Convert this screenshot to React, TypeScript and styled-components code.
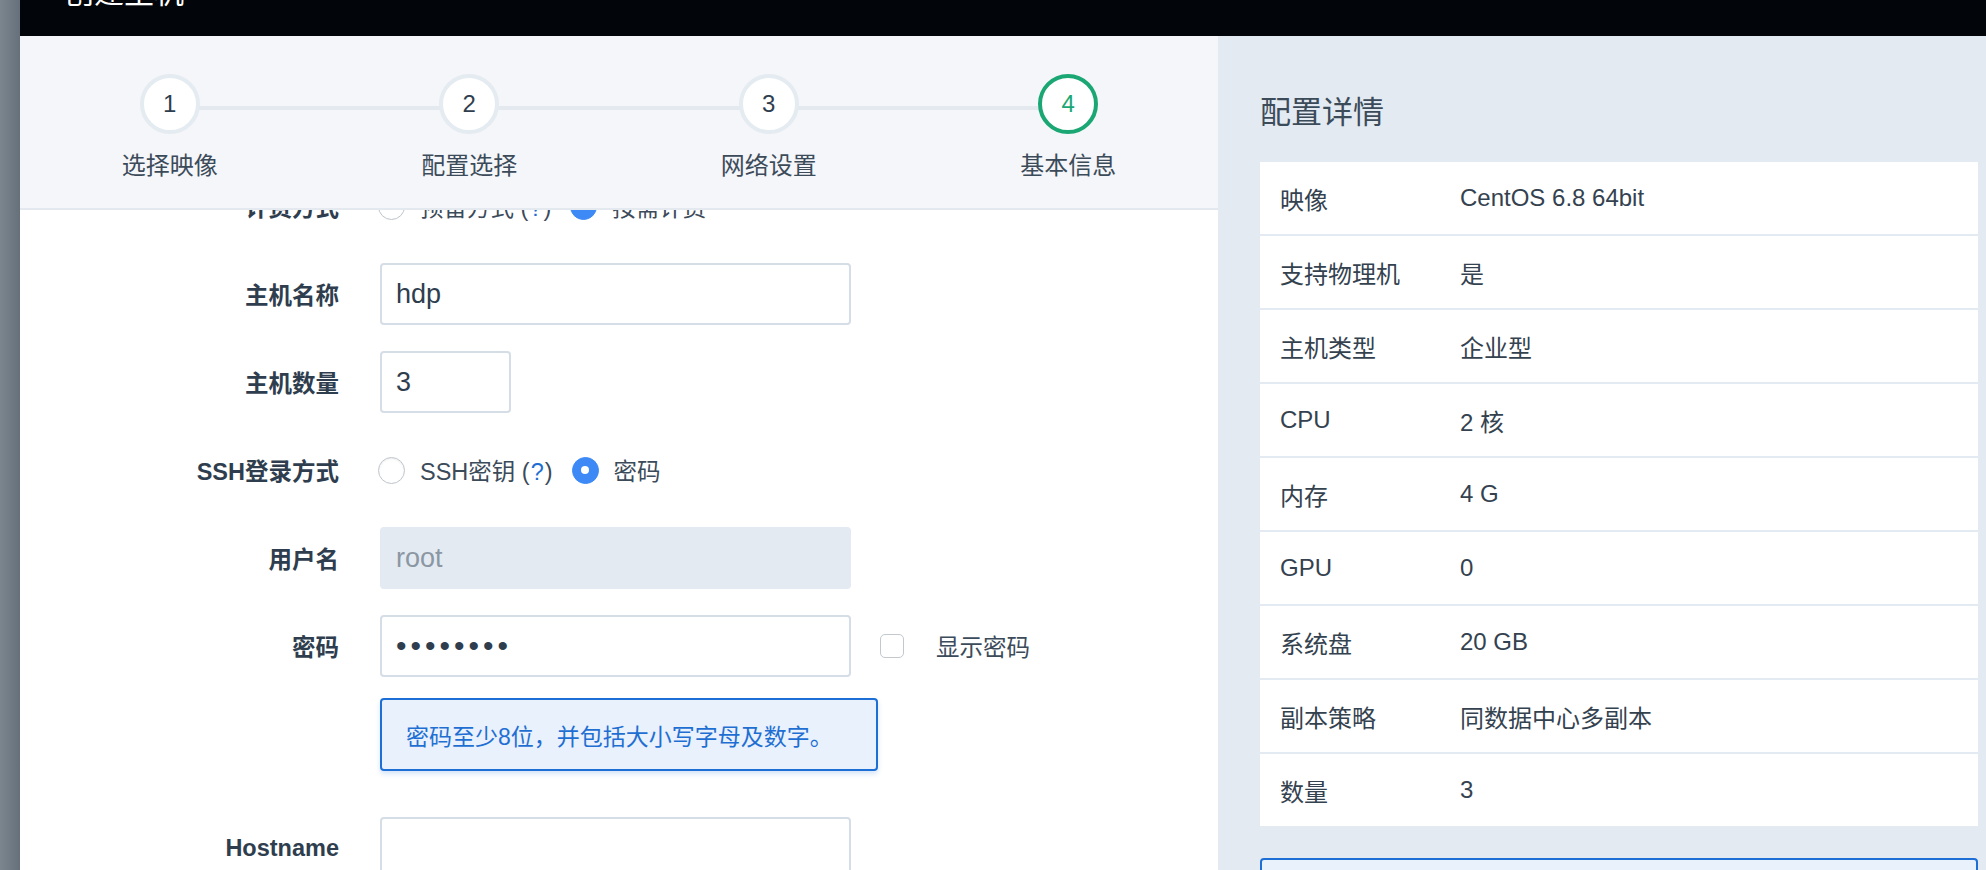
import React, { useLayoutEffect, useRef } from 'react';
import styled, { createGlobalStyle } from 'styled-components';

const GlobalStyle = createGlobalStyle`
  html, body {
    margin: 0;
    padding: 0;
  }
  body {
    font-family: "Liberation Sans", "Noto Sans CJK SC", sans-serif;
    background: #fff;
  }
  * {
    box-sizing: border-box;
  }
`;

const Page = styled.div`
  display: flex;
  width: 1986px;
  height: 870px;
  overflow: hidden;
`;

const Backdrop = styled.div`
  flex: none;
  width: 20px;
  background: linear-gradient(90deg, #7c868f 0%, #66707a 100%);
`;

const Modal = styled.div`
  flex: 1;
  display: flex;
  flex-direction: column;
  min-width: 0;
`;

const Header = styled.div`
  flex: none;
  height: 36px;
  display: flex;
  justify-content: space-between;
  padding: 0 8px 0 44px;
  background: #02060a;
  overflow: hidden;
`;

const HeaderTitle = styled.div`
  margin-top: -22px;
  font-size: 30px;
  line-height: 30px;
  color: #fff;
`;

const Close = styled.div`
  margin-top: -22px;
  font-size: 30px;
  line-height: 30px;
  color: #fff;
`;

const Body = styled.div`
  flex: 1;
  display: flex;
  min-height: 0;
`;

const LeftPane = styled.div`
  flex: none;
  width: 1198px;
  display: flex;
  flex-direction: column;
  background: #fff;
`;

const Steps = styled.div`
  flex: none;
  height: 174px;
  display: flex;
  padding-top: 38px;
  background: #f4f6f9;
  border-bottom: 2px solid #e3e9ef;
`;

const Step = styled.div`
  position: relative;
  width: 300px;
  display: flex;
  flex-direction: column;
  align-items: center;

  &:not(:last-child)::after {
    content: '';
    position: absolute;
    top: 32px;
    left: 50%;
    width: 300px;
    height: 4px;
    background: #e3e9ef;
  }
`;

const StepCircle = styled.div<{ $active?: boolean }>`
  position: relative;
  z-index: 1;
  width: 60px;
  height: 60px;
  display: flex;
  align-items: center;
  justify-content: center;
  border-radius: 50%;
  border: 4px solid ${(p) => (p.$active ? '#1aa774' : '#e4ebf1')};
  background: #fff;
  font-size: 24px;
  color: ${(p) => (p.$active ? '#1aa774' : '#2f3e4e')};
`;

const StepLabel = styled.div`
  margin-top: 16px;
  font-size: 24px;
  line-height: 32px;
  color: #3c4b5a;
`;

const FormViewport = styled.div`
  flex: 1;
  overflow: hidden;
`;

const Form = styled.div`
  padding: 40px 0 80px;
`;

const Row = styled.div<{ $after?: number }>`
  display: grid;
  grid-template-columns: 319px 1fr;
  column-gap: 41px;
  align-items: center;
  min-height: 62px;
  margin-bottom: ${(p) => p.$after ?? 26}px;
`;

const Label = styled.div`
  text-align: right;
  font-size: 23.5px;
  font-weight: 700;
  color: #2f3e4e;
`;

const Control = styled.div`
  display: flex;
  align-items: center;
`;

const TextInput = styled.input<{ $w: number; $secret?: boolean }>`
  width: ${(p) => p.$w}px;
  height: 62px;
  padding: 0 14px;
  border: 2px solid #d5dde6;
  border-radius: 4px;
  background: #fff;
  font-family: inherit;
  font-size: ${(p) => (p.$secret ? 30 : 27)}px;
  letter-spacing: ${(p) => (p.$secret ? 4 : 0)}px;
  color: #2f3e4e;
  outline: none;

  &:disabled {
    background: #e3eaf1;
    border-color: #e3eaf1;
    color: #8b97a3;
  }
`;

const Option = styled.label`
  display: inline-flex;
  align-items: center;
  gap: 15px;
  margin-right: 20px;
  font-size: 23.5px;
  color: #3c4b5a;
`;

const RadioDot = styled.span<{ $checked?: boolean }>`
  flex: none;
  width: 27px;
  height: 27px;
  margin-left: -2px;
  display: inline-flex;
  align-items: center;
  justify-content: center;
  border-radius: 50%;
  border: 1px solid ${(p) => (p.$checked ? '#3d8af7' : '#bfc5cb')};
  background: ${(p) => (p.$checked ? '#3d8af7' : '#fff')};
  box-shadow: ${(p) => (p.$checked ? 'none' : 'inset 0 1px 2px rgba(0,0,0,0.08)')};

  &::after {
    content: '';
    width: 8px;
    height: 8px;
    border-radius: 50%;
    background: #fff;
    display: ${(p) => (p.$checked ? 'block' : 'none')};
  }
`;

const Help = styled.span`
  font-weight: 300;
  color: #3c4b5a;
  letter-spacing: 1px;
`;

const HelpMark = styled.span`
  color: #1f6fd3;
`;

const CheckBox = styled.span`
  flex: none;
  width: 24px;
  height: 24px;
  margin-left: 29px;
  border: 1.5px solid #c2c8ce;
  border-radius: 5px;
  background: #fff;
`;

const CheckText = styled.span`
  margin-left: 32px;
  font-size: 23.5px;
  color: #3c4b5a;
`;

const Tip = styled.div`
  width: 498px;
  height: 73px;
  display: flex;
  align-items: center;
  padding-left: 24px;
  border: 2px solid #1d6fd6;
  border-radius: 4px;
  background: #e9f1fc;
  box-shadow: 0 3px 5px rgba(29, 111, 214, 0.18);
  font-size: 23px;
  color: #1f6fd3;
`;

const RightPane = styled.div`
  flex: 1;
  padding: 57px 8px 0 42px;
  background: #e3eaf1;
  overflow: hidden;
`;

const PanelTitle = styled.h2`
  margin: 0;
  font-size: 31px;
  line-height: 40px;
  font-weight: 400;
  color: #3c4b5a;
`;

const InfoCard = styled.div`
  margin-top: 29px;
  display: flex;
  flex-direction: column;
  gap: 2px;
`;

const InfoRow = styled.div`
  height: 72px;
  display: flex;
  align-items: center;
  padding-left: 20px;
  background: #fff;
  font-size: 24px;
  color: #34424f;
`;

const InfoKey = styled.span`
  width: 180px;
  flex: none;
`;

const Notice = styled.div`
  margin-top: 32px;
  height: 80px;
  border: 2px solid #1d6fd6;
  border-radius: 4px;
  background: #e9f1fc;
`;

const steps = ['选择映像', '配置选择', '网络设置', '基本信息'];

const details: [string, string][] = [
  ['映像', 'CentOS 6.8 64bit'],
  ['支持物理机', '是'],
  ['主机类型', '企业型'],
  ['CPU', '2 核'],
  ['内存', '4 G'],
  ['GPU', '0'],
  ['系统盘', '20 GB'],
  ['副本策略', '同数据中心多副本'],
  ['数量', '3'],
];

export default function App() {
  const viewport = useRef<HTMLDivElement>(null);

  // the form is scrolled down a little in the screenshot
  useLayoutEffect(() => {
    if (viewport.current) viewport.current.scrollTop = 75;
  }, []);

  return (
    <>
      <GlobalStyle />
      <Page>
        <Backdrop />
        <Modal>
          <Header>
            <HeaderTitle>创建主机</HeaderTitle>
            <Close>×</Close>
          </Header>
          <Body>
            <LeftPane>
              <Steps>
                {steps.map((s, i) => (
                  <Step key={s}>
                    <StepCircle $active={i === steps.length - 1}>{i + 1}</StepCircle>
                    <StepLabel>{s}</StepLabel>
                  </Step>
                ))}
              </Steps>
              <FormViewport ref={viewport}>
                <Form>
                  <Row>
                    <Label>计费方式</Label>
                    <Control>
                      <Option>
                        <RadioDot />
                        <span>
                          预留方式 <Help>(<HelpMark>?</HelpMark>)</Help>
                        </span>
                      </Option>
                      <Option>
                        <RadioDot $checked />
                        <span>按需计费</span>
                      </Option>
                    </Control>
                  </Row>
                  <Row>
                    <Label>主机名称</Label>
                    <Control>
                      <TextInput $w={471} defaultValue="hdp" />
                    </Control>
                  </Row>
                  <Row>
                    <Label>主机数量</Label>
                    <Control>
                      <TextInput $w={131} defaultValue="3" />
                    </Control>
                  </Row>
                  <Row>
                    <Label>SSH登录方式</Label>
                    <Control>
                      <Option>
                        <RadioDot />
                        <span>
                          SSH密钥 <Help>(<HelpMark>?</HelpMark>)</Help>
                        </span>
                      </Option>
                      <Option>
                        <RadioDot $checked />
                        <span>密码</span>
                      </Option>
                    </Control>
                  </Row>
                  <Row>
                    <Label>用户名</Label>
                    <Control>
                      <TextInput $w={471} defaultValue="root" disabled />
                    </Control>
                  </Row>
                  <Row $after={21}>
                    <Label>密码</Label>
                    <Control>
                      <TextInput $w={471} $secret type="password" defaultValue="password" />
                      <CheckBox />
                      <CheckText>显示密码</CheckText>
                    </Control>
                  </Row>
                  <Row $after={46}>
                    <span />
                    <Tip>密码至少8位，并包括大小写字母及数字。</Tip>
                  </Row>
                  <Row>
                    <Label>Hostname</Label>
                    <Control>
                      <TextInput $w={471} defaultValue="" />
                    </Control>
                  </Row>
                </Form>
              </FormViewport>
            </LeftPane>
            <RightPane>
              <PanelTitle>配置详情</PanelTitle>
              <InfoCard>
                {details.map(([k, v]) => (
                  <InfoRow key={k}>
                    <InfoKey>{k}</InfoKey>
                    <span>{v}</span>
                  </InfoRow>
                ))}
              </InfoCard>
              <Notice />
            </RightPane>
          </Body>
        </Modal>
      </Page>
    </>
  );
}
